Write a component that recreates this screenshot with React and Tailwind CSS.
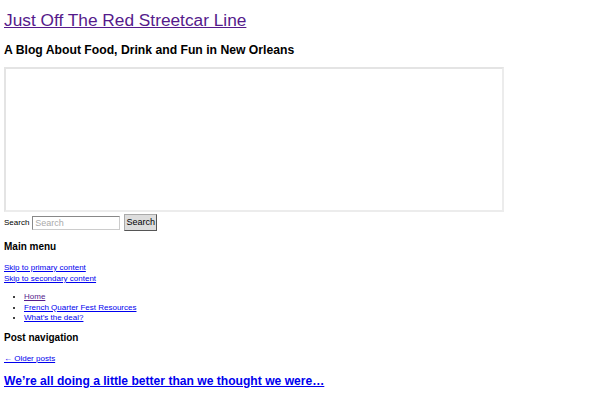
export default function App() {
  return (
    <div className="min-h-[400px] bg-white px-1 font-['Liberation_Sans',Arial,sans-serif] text-black">
      {/* Header */}
      <div className="pt-[9px]">
        <a href="#" className="text-[17.3px] leading-[21px] text-[#551a8b] underline">
          Just Off The Red Streetcar Line
        </a>
      </div>
      <h2 className="mt-[10px] text-[12.2px] font-bold leading-[15px]">
        A Blog About Food, Drink and Fun in New Orleans
      </h2>

      {/* Embedded frame */}
      <div className="mt-[9px] h-[145px] w-[500px] border-2 border-[#e4e4e4] border-r-[#ececec] border-b-[#ececec]" />

      {/* Search */}
      <div className="mt-[2px] flex items-center text-[8px]">
        <span>Search</span>
        <input
          type="text"
          placeholder="Search"
          className="ml-[3px] h-[14px] w-[88px] border border-[#888] border-r-[#ccc] border-b-[#ccc] px-[2px] text-[9px] placeholder:text-[#aaa] outline-none"
        />
        <button className="ml-[4px] h-[17px] w-[33px] border border-[#aaa] border-r-[#555] border-b-[#555] bg-[#ddd] text-[9px] text-black">
          Search
        </button>
      </div>

      {/* Main menu */}
      <h3 className="mt-[10px] text-[10px] font-bold leading-[12px]">Main menu</h3>
      <div className="mt-[9px] flex flex-col text-[8px] leading-[11px]">
        <a href="#" className="self-start text-[#0000ee] underline">Skip to primary content</a>
        <a href="#" className="self-start text-[#0000ee] underline">Skip to secondary content</a>
      </div>
      <ul className="mt-[8px] list-disc pl-[20px] text-[8px] leading-[10.5px]">
        <li><a href="#" className="text-[#551a8b] underline">Home</a></li>
        <li><a href="#" className="text-[#0000ee] underline">French Quarter Fest Resources</a></li>
        <li><a href="#" className="text-[#0000ee] underline">What’s the deal?</a></li>
      </ul>

      {/* Post navigation */}
      <h3 className="mt-[8px] text-[10px] font-bold leading-[12px]">Post navigation</h3>
      <div className="mt-[10px] text-[8px] leading-[10px]">
        <a href="#" className="text-[#0000ee] underline">← Older posts</a>
      </div>
      <h1 className="mt-[10px] text-[12.1px] font-bold leading-[15px]">
        <a href="#" className="text-[#0000ee] underline">
          We’re all doing a little better than we thought we were…
        </a>
      </h1>
    </div>
  );
}
